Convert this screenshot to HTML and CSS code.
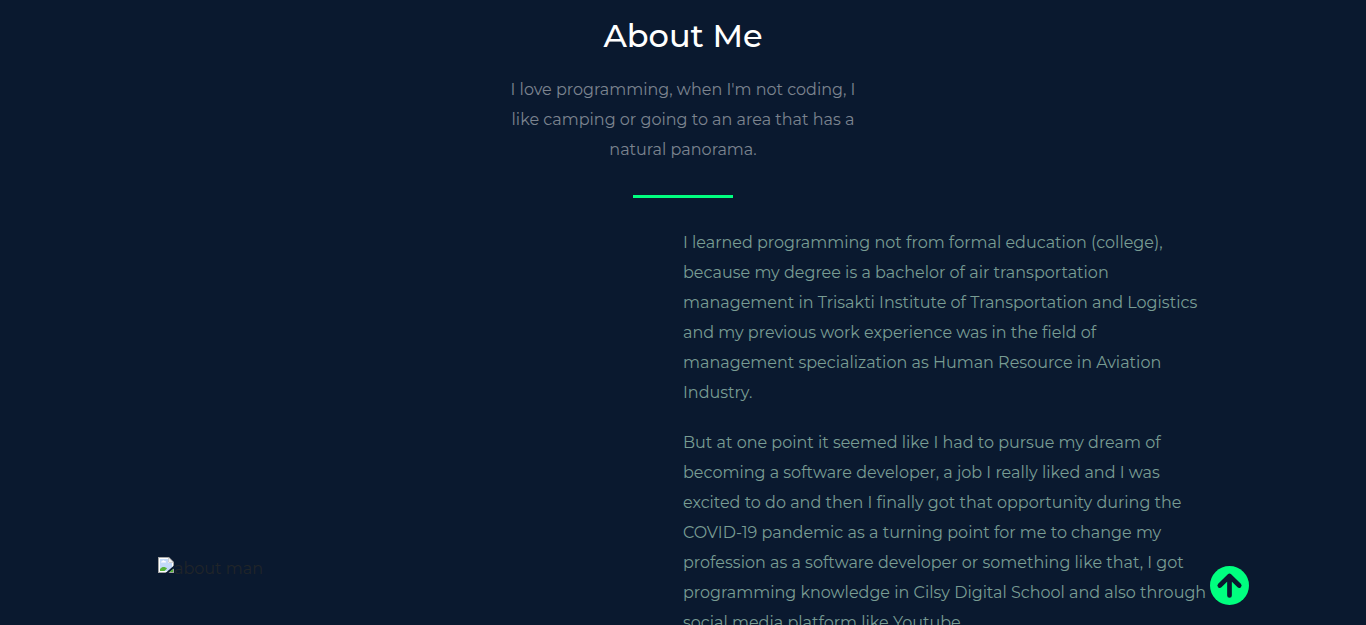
FILE: index.html
```html
<!DOCTYPE html>
<html lang="en">
<head>
<meta charset="utf-8">
<meta name="viewport" content="width=device-width, initial-scale=1">
<title>About Me</title>
<link rel="stylesheet" href="styles.css">
</head>
<body>
<main class="about">
  <header class="intro">
    <h2 class="title">About Me</h2>
    <p class="lead">I love programming, when I'm not coding, I like camping or going to an area that has a natural panorama.</p>
    <hr class="rule">
  </header>
  <div class="columns">
    <figure class="photo">
      <svg class="photo-icon" width="16" height="16" viewBox="0 0 16 16" aria-hidden="true">
        <path d="M0 0h11l5 5v11H0z" fill="#a3a3a3"/>
        <path d="M1 1h9.500v4.500H15V15H1z" fill="#fff"/>
        <path d="M2 2h8v4h4v8H2z" fill="#c3d9f8"/>
        <path d="M11 1v4h4z" fill="#f1f1f1"/>
        <path d="M3 5.500h5c0-1-.7-1.500-1.400-1.400C6 2.800 4.500 3 4.300 4.200 3.500 4.100 3 4.800 3 5.500z" fill="#fff"/>
        <path d="M2 14v-2c2-2.600 5-2.600 7-.5L6.500 14z" fill="#55b335"/>
        <path d="M16 8.500L7.500 16h3l5.500-4.500z" fill="#0a192f"/>
        <path d="M11.500 15L15 12v3z" fill="#55b335"/>
      </svg>
      <figcaption class="photo-alt">about man</figcaption>
    </figure>
    <div class="story">
      <p>I learned programming not from formal education (college), because my degree is a bachelor of air transportation management in Trisakti Institute of Transportation and Logistics and my previous work experience was in the field of management specialization as Human Resource in Aviation Industry.</p>
      <p>But at one point it seemed like I had to pursue my dream of becoming a software developer, a job I really liked and I was excited to do and then I finally got that opportunity during the COVID-19 pandemic as a turning point for me to change my profession as a software developer or something like that, I got programming knowledge in Cilsy Digital School and also through social media platform like Youtube.</p>
    </div>
  </div>
</main>
<a class="to-top" href="#" aria-label="Back to top">
  <svg width="39" height="39" viewBox="0 0 39 39" aria-hidden="true">
    <circle cx="19.500" cy="19.500" r="19.500" fill="#00ff7f"/>
    <path d="M19.500 29.500V10M9.800 19.500l9.700-9.500 9.700 9.500" fill="none" stroke="#0a192f" stroke-width="4.700" stroke-linecap="round" stroke-linejoin="round"/>
  </svg>
</a>
</body>
</html>
```
FILE: styles.css
```css
* { box-sizing: border-box; }
body {
  margin: 0;
  background: #0a192f;
  font-family: Montserrat, Inter, sans-serif;
  font-size: 16px;
  line-height: 30px;
}
.about {
  max-width: 1050px;
  margin: 0 auto;
  padding: 16px 0 48px;
}
.intro { text-align: center; }
.title {
  margin: 0 0 19px;
  color: #fff;
  font-size: 32px;
  font-weight: 500;
  line-height: 40px;
}
.lead {
  max-width: 350px;
  margin: 0 auto;
  color: #7c848f;
}
.rule {
  width: 100px;
  height: 3px;
  margin: 30px auto;
  border: 0;
  background: #00ff7f;
}
.columns {
  display: grid;
  grid-template-columns: 1fr 1fr;
}
.photo {
  display: flex;
  align-items: flex-start;
  margin: 0;
  padding-top: 329px;
  color: #212529;
}
.photo-alt { line-height: 24px; }
.story { color: #789c93; }
.story p { margin: 0 0 20px; }
.to-top {
  position: fixed;
  right: 117px;
  bottom: 20px;
  display: flex;
}
```
